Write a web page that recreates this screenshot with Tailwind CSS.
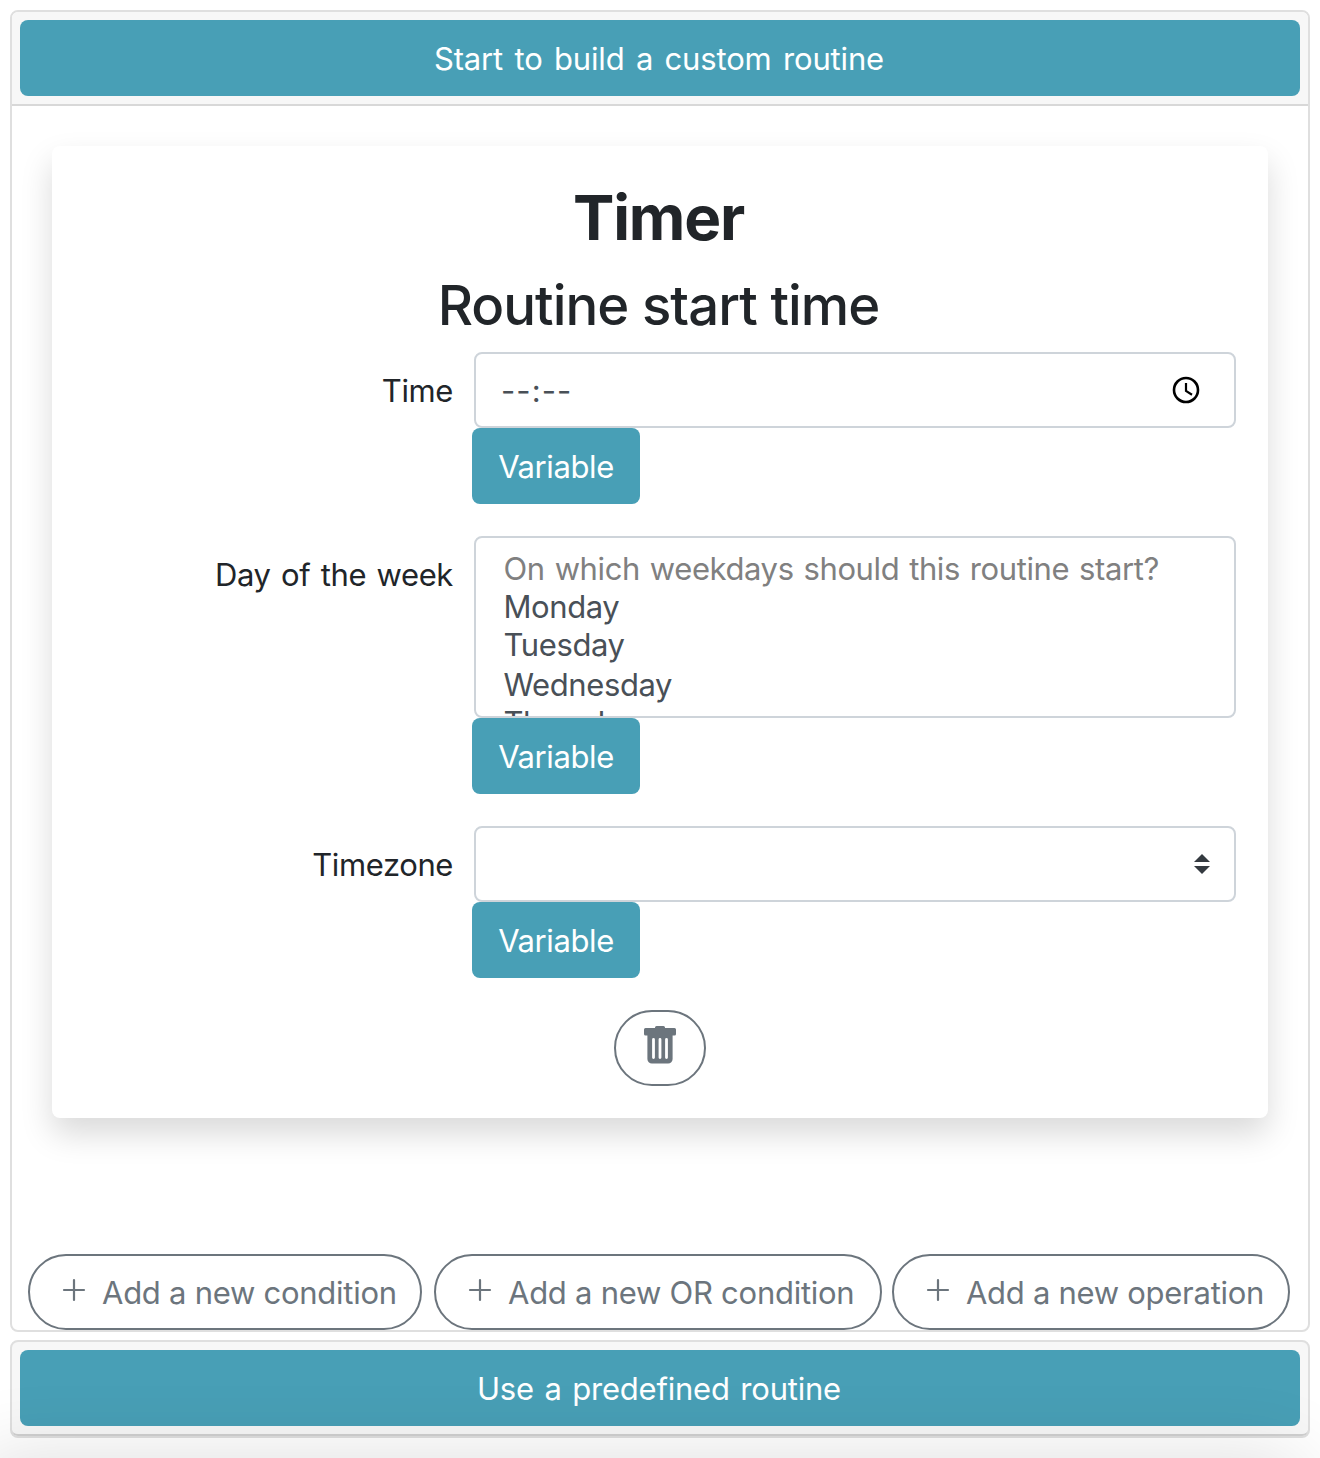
<!DOCTYPE html>
<html lang="en">
<head>
<meta charset="utf-8">
<title>Routine builder</title>
<script src="https://cdn.jsdelivr.net/npm/@tailwindcss/browser@4"></script>
</head>
<body class="relative h-[1458px] w-[1320px] overflow-hidden bg-white p-[10px] font-['Inter',sans-serif] text-[31px] leading-[48px] tracking-[-0.4px] text-[#212529]">

<section class="flex h-[1322px] flex-col rounded-lg border-2 border-[#dfdfdf] bg-white">
  <header class="rounded-t-md border-b-2 border-[#d8d8d8] bg-[#f7f7f7] p-2">
    <button class="flex h-[76px] w-full items-center justify-center rounded-lg bg-[#489fb6] pt-0.5 pr-0.5 tracking-[-0.15px] text-white [word-spacing:2.8px]">Start to build a custom routine</button>
  </header>

  <div class="mx-10 mt-10 flex h-[972px] flex-col rounded-lg bg-white px-8 pt-8 shadow-[0_16px_32px_rgba(0,0,0,0.15)]">
    <h1 class="mt-px h-[77px] pr-[3px] text-center text-[62px] font-bold leading-[77px] tracking-[-1.2px]">Timer</h1>
    <h2 class="mt-4 h-[67px] pr-[3px] text-center text-[54.5px] font-medium leading-[67px] tracking-[-0.95px]">Routine start time</h2>

    <div class="mt-[13px] flex h-[152px]">
      <label class="w-[369px] pt-[15px] text-right">Time</label>
      <div class="ml-[19px] flex-1">
        <div class="ml-0.5 flex h-[76px] items-center justify-between rounded-lg border-2 border-[#ced4da] pl-[25px] pr-[34px] text-[#495057]">
          <span class="pt-0.5 tracking-[1.1px]">--:--</span>
          <svg class="h-7 w-7" viewBox="0 0 28 28" fill="none" stroke="#000"><circle cx="14" cy="14" r="12" stroke-width="2.6"/><path d="M14 7v8l6 3.7" stroke-width="2.2"/></svg>
        </div>
        <button class="flex h-[76px] w-[168px] items-center justify-center rounded-lg bg-[#489fb6] pt-0.5 text-white">Variable</button>
      </div>
    </div>

    <div class="mt-8 flex h-[258px]">
      <label class="w-[369px] pt-[15px] text-right [word-spacing:2.2px]">Day of the week</label>
      <div class="ml-[19px] flex-1">
        <ul class="ml-0.5 h-[182px] overflow-hidden rounded-lg border-2 border-[#ced4da] pl-[27.5px] pt-3 leading-[38px] text-[#495057]">
          <li class="h-[38px] text-[#808080] [word-spacing:1.6px]">On which weekdays should this routine start?</li>
          <li class="h-[38px]">Monday</li>
          <li class="h-[40px]">Tuesday</li>
          <li class="h-[38px]">Wednesday</li>
          <li class="h-[38px]">Thursday</li>
        </ul>
        <button class="flex h-[76px] w-[168px] items-center justify-center rounded-lg bg-[#489fb6] pt-0.5 text-white">Variable</button>
      </div>
    </div>

    <div class="mt-8 flex h-[152px]">
      <label class="w-[369px] pt-[15px] text-right">Timezone</label>
      <div class="ml-[19px] flex-1">
        <div class="ml-0.5 flex h-[76px] items-center justify-end rounded-lg border-2 border-[#ced4da] pr-6">
          <svg class="h-5 w-4" viewBox="0 0 16 20" fill="#343a40"><path d="M0 8 8 0l8 8zM0 12h16l-8 8z"/></svg>
        </div>
        <button class="flex h-[76px] w-[168px] items-center justify-center rounded-lg bg-[#489fb6] pt-0.5 text-white">Variable</button>
      </div>
    </div>

    <button class="mx-auto mt-8 flex h-[76px] w-[92px] justify-center rounded-full border-2 border-[#6c757d] pt-[13px]" aria-label="Delete">
      <svg class="h-[40px] w-[34px]" viewBox="0 0 34 40" fill="#6c757d"><path fill-rule="evenodd" d="M13.5 1h7a1.5 1.5 0 0 1 1.5 1.5V3h9.500a1.500 1.500 0 0 1 1.500 1.500v4.500a1.500 1.500 0 0 1-1.500 1.500H29.600V34a4.500 4.500 0 0 1-4.500 4.500h-16.200A4.500 4.500 0 0 1 4.400 34V10.500H2.500A1.500 1.500 0 0 1 1 9V4.500A1.500 1.500 0 0 1 2.500 3H12v-.5A1.500 1.500 0 0 1 13.500 1zM10.500 13a1.400 1.400 0 0 0-1.400 1.400v18.200a1.400 1.400 0 0 0 2.800 0V14.400a1.400 1.400 0 0 0-1.400-1.400zm6.500 0a1.400 1.400 0 0 0-1.400 1.400v18.200a1.400 1.400 0 0 0 2.800 0V14.400A1.400 1.400 0 0 0 17 13zm6.500 0a1.400 1.400 0 0 0-1.400 1.400v18.200a1.400 1.400 0 0 0 2.800 0V14.400a1.400 1.400 0 0 0-1.400-1.400z"/></svg>
    </button>
  </div>

  <div class="mt-auto flex pl-4 tracking-[-0.26px] text-[#6c757d] [word-spacing:1.1px]">
    <button class="flex h-[76px] w-[394px] items-center rounded-full border-2 border-[#6c757d] pl-8">
      <svg class="mb-1 mr-4 h-6 w-6" viewBox="0 0 24 24" fill="none" stroke="currentColor" stroke-width="2.2" stroke-linecap="round"><path d="M12 2v20M2 12h20"/></svg><span class="pt-0.5 tracking-[-0.26px]">Add a new condition</span>
    </button>
    <button class="ml-3 flex h-[76px] w-[448px] items-center rounded-full border-2 border-[#6c757d] pl-8">
      <svg class="mb-1 mr-4 h-6 w-6" viewBox="0 0 24 24" fill="none" stroke="currentColor" stroke-width="2.2" stroke-linecap="round"><path d="M12 2v20M2 12h20"/></svg><span class="pt-0.5 tracking-[-0.26px]">Add a new OR condition</span>
    </button>
    <button class="ml-2.5 flex h-[76px] w-[398px] items-center rounded-full border-2 border-[#6c757d] pl-8">
      <svg class="mb-1 mr-4 h-6 w-6" viewBox="0 0 24 24" fill="none" stroke="currentColor" stroke-width="2.2" stroke-linecap="round"><path d="M12 2v20M2 12h20"/></svg><span class="pt-0.5 tracking-[-0.28px]">Add a new operation</span>
    </button>
  </div>
</section>

<section class="mt-2 h-[98px] rounded-lg border-2 border-[#dfdfdf] bg-[#f7f7f7]">
  <header class="rounded-md border-b-2 border-[#d0d0d0] p-2">
    <button class="flex h-[76px] w-full items-center justify-center rounded-lg bg-[#489fb6] pt-0.5 pr-0.5 tracking-[-0.2px] text-white [word-spacing:2px]">Use a predefined routine</button>
  </header>
</section>

<!-- Shadow cast upward by the panel below the fold -->
<div class="pointer-events-none absolute inset-0 overflow-hidden">
  <div class="-ml-5 mt-[1458px] h-[200px] w-[1320px] shadow-[0_0_80px_rgba(0,0,0,0.135)]"></div>
</div>
</body>
</html>
